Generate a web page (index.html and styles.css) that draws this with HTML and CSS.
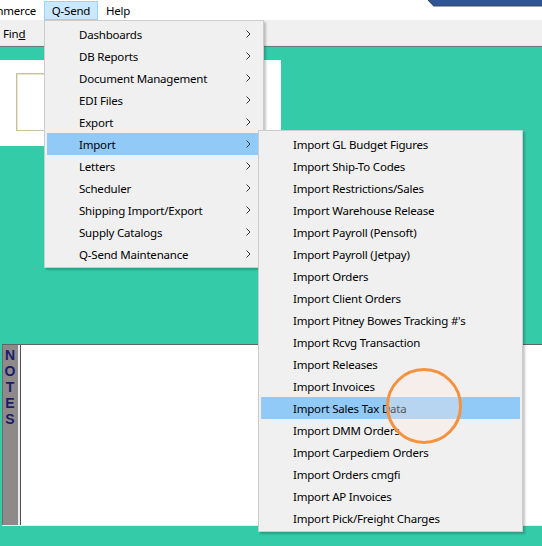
FILE: index.html
```html
<!DOCTYPE html>
<html>
<head>
<meta charset="utf-8">
<link rel="stylesheet" href="styles.css">
</head>
<body>
<div class="window">
  <div class="menubar">
    <span class="mb-item mb-first">Commerce</span>
    <span class="mb-item mb-open">Q-Send</span>
    <span class="mb-item">Help</span>
    <svg class="title-tab" width="114" height="7" viewBox="0 0 114 7">
      <polygon points="0,0 114,0 114,6 6,6" fill="#2f5597"/>
      <polyline points="0,0 6,6 114,6" fill="none" stroke="#3b4a60" stroke-width="1.2"/>
    </svg>
  </div>
  <div class="toolbar">
    <span class="tb-item">Fin<u>d</u></span>
  </div>
  <div class="toolbar-edge"></div>
  <div class="workspace">
    <div class="panel">
      <div class="frame"></div>
    </div>
    <div class="notes">
      <div class="notes-label">NOTES</div>
      <div class="notes-body"></div>
    </div>
  </div>

  <div class="menu menu-main">
    <div class="menu-item"><span>Dashboards</span><svg class="chev" width="5" height="8" viewBox="0 0 5 8"><polyline points="0.5,0.5 4,4 0.5,7.5"/></svg></div>
    <div class="menu-item"><span>DB Reports</span><svg class="chev" width="5" height="8" viewBox="0 0 5 8"><polyline points="0.5,0.5 4,4 0.5,7.5"/></svg></div>
    <div class="menu-item"><span>Document Management</span><svg class="chev" width="5" height="8" viewBox="0 0 5 8"><polyline points="0.5,0.5 4,4 0.5,7.5"/></svg></div>
    <div class="menu-item"><span>EDI Files</span><svg class="chev" width="5" height="8" viewBox="0 0 5 8"><polyline points="0.5,0.5 4,4 0.5,7.5"/></svg></div>
    <div class="menu-item"><span>Export</span><svg class="chev" width="5" height="8" viewBox="0 0 5 8"><polyline points="0.5,0.5 4,4 0.5,7.5"/></svg></div>
    <div class="menu-item active"><span>Import</span><svg class="chev" width="5" height="8" viewBox="0 0 5 8"><polyline points="0.5,0.5 4,4 0.5,7.5"/></svg></div>
    <div class="menu-item"><span>Letters</span><svg class="chev" width="5" height="8" viewBox="0 0 5 8"><polyline points="0.5,0.5 4,4 0.5,7.5"/></svg></div>
    <div class="menu-item"><span>Scheduler</span><svg class="chev" width="5" height="8" viewBox="0 0 5 8"><polyline points="0.5,0.5 4,4 0.5,7.5"/></svg></div>
    <div class="menu-item"><span>Shipping Import/Export</span><svg class="chev" width="5" height="8" viewBox="0 0 5 8"><polyline points="0.5,0.5 4,4 0.5,7.5"/></svg></div>
    <div class="menu-item"><span>Supply Catalogs</span><svg class="chev" width="5" height="8" viewBox="0 0 5 8"><polyline points="0.5,0.5 4,4 0.5,7.5"/></svg></div>
    <div class="menu-item"><span>Q-Send Maintenance</span><svg class="chev" width="5" height="8" viewBox="0 0 5 8"><polyline points="0.5,0.5 4,4 0.5,7.5"/></svg></div>
  </div>

  <div class="menu menu-sub">
    <div class="menu-item"><span>Import GL Budget Figures</span></div>
    <div class="menu-item"><span>Import Ship-To Codes</span></div>
    <div class="menu-item"><span>Import Restrictions/Sales</span></div>
    <div class="menu-item"><span>Import Warehouse Release</span></div>
    <div class="menu-item"><span>Import Payroll (Pensoft)</span></div>
    <div class="menu-item"><span>Import Payroll (Jetpay)</span></div>
    <div class="menu-item"><span>Import Orders</span></div>
    <div class="menu-item"><span>Import Client Orders</span></div>
    <div class="menu-item"><span>Import Pitney Bowes Tracking #'s</span></div>
    <div class="menu-item"><span>Import Rcvg Transaction</span></div>
    <div class="menu-item"><span>Import Releases</span></div>
    <div class="menu-item"><span>Import Invoices</span></div>
    <div class="menu-item active"><span>Import Sales Tax Data</span></div>
    <div class="menu-item"><span>Import DMM Orders</span></div>
    <div class="menu-item"><span>Import Carpediem Orders</span></div>
    <div class="menu-item"><span>Import Orders cmgfi</span></div>
    <div class="menu-item"><span>Import AP Invoices</span></div>
    <div class="menu-item"><span>Import Pick/Freight Charges</span></div>
  </div>

  <div class="ring"></div>
</div>
</body>
</html>
```

FILE: styles.css
```css
html, body {
  margin: 0;
  padding: 0;
}

body {
  font-family: "Noto Sans", "Open Sans", sans-serif;
  font-size: 11.5px;
  letter-spacing: -0.2px;
  color: #000;
}

.window {
  position: relative;
  width: 542px;
  height: 546px;
  overflow: hidden;
  display: flex;
  flex-direction: column;
  background: #34cba9;
}

/* menu bar */
.menubar {
  position: relative;
  height: 20px;
  background: #fff;
  display: flex;
  align-items: stretch;
  flex: none;
}

.mb-item {
  display: flex;
  align-items: center;
  padding: 0 7px;
  border: 1px solid transparent;
  margin-top: 1px;
  white-space: nowrap;
}

.mb-first {
  margin-left: -20px;
  width: 64px;
  padding: 0 7px 0 0;
  justify-content: flex-end;
  box-sizing: border-box;
}

.mb-open {
  background: #cce8ff;
  border-color: #99d1ff;
  width: 54px;
  padding: 0;
  justify-content: center;
  box-sizing: border-box;
}

.title-tab {
  position: absolute;
  right: 0;
  top: 0;
}

/* toolbar */
.toolbar {
  height: 25px;
  background: #f0f0f0;
  display: flex;
  align-items: center;
  flex: none;
}

.tb-item {
  padding-left: 3px;
  padding-top: 1px;
}

.toolbar-edge {
  height: 0;
  border-top: 1px solid #d6efe9;
  border-bottom: 1px solid #6f7a77;
  flex: none;
}

/* teal workspace */
.workspace {
  flex: 1;
  display: flex;
  flex-direction: column;
  padding-top: 13px;
}

.panel {
  width: 281px;
  height: 86px;
  box-sizing: border-box;
  background: #fff;
  padding: 13px 17px 15px 16px;
}

.frame {
  height: 100%;
  box-sizing: border-box;
  border: 1px solid #c9c19f;
  box-shadow: inset 1px 1px 0 #e8e3cf;
}

.notes {
  margin-top: 198px;
  margin-left: 2px;
  height: 182px;
  display: flex;
  border-top: 1px solid #5e6664;
  border-bottom: 1px solid #dcf5ef;
  box-sizing: border-box;
}

.notes-label {
  width: 18px;
  flex: none;
  background: #8f8a8a;
  border-left: 1px solid #6d6d6d;
  border-right: 2px solid #e9e9e9;
  color: #1b1b6c;
  font-family: "Liberation Sans", Arial, sans-serif;
  font-weight: bold;
  font-size: 14px;
  writing-mode: vertical-rl;
  text-orientation: upright;
  letter-spacing: 0;
  line-height: 17px;
  padding-top: 2px;
  box-sizing: border-box;
}

.notes-body {
  flex: 1;
  background: #fff;
  border-left: 1px solid #4f4f4f;
}

/* dropdown menus */
.menu {
  position: absolute;
  box-sizing: border-box;
  background: #f0f0f0;
  border: 1px solid #cccccc;
  padding: 2px;
  box-shadow: 2px 2px 2px rgba(0, 0, 0, 0.22);
}

.menu-main {
  left: 44px;
  top: 20px;
  width: 220px;
}

.menu-sub {
  left: 258px;
  top: 130px;
  width: 265px;
}

.menu-item {
  height: 22px;
  display: flex;
  align-items: center;
  justify-content: space-between;
  padding-left: 32px;
  padding-right: 10px;
  white-space: nowrap;
}

.menu-item.active {
  background: #91c9f7;
}

.chev {
  fill: none;
  stroke: #333;
  stroke-width: 1;
}

/* annotation ring */
.ring {
  position: absolute;
  left: 386px;
  top: 368px;
  width: 76px;
  height: 76px;
  box-sizing: border-box;
  border: 3px solid #f5923e;
  border-radius: 50%;
  background: rgba(255, 236, 225, 0.35);
}
```
